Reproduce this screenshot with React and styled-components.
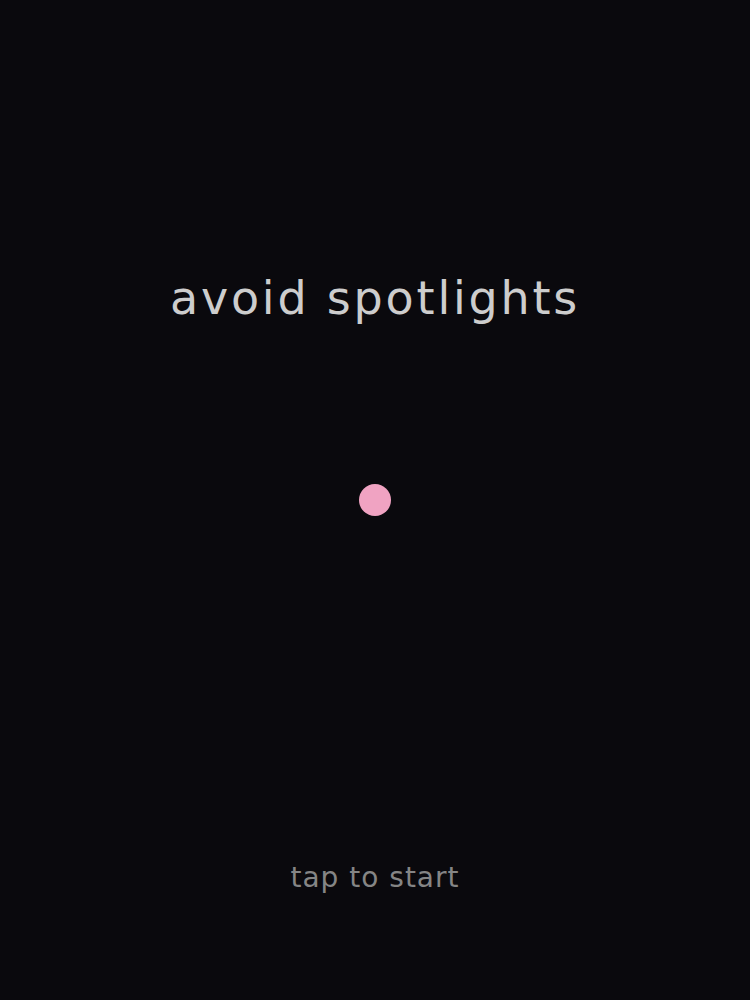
import React from "react";
import styled, { createGlobalStyle } from "styled-components";

const GlobalStyle = createGlobalStyle`
  html, body {
    margin: 0;
    padding: 0;
    background-color: #0a090d;
  }
`

const Screen = styled.div`
  height: 1000px;
  display: flex;
  flex-direction: column;
  align-items: center;
  background-color: #0a090d;
  font-family: "DejaVu Sans", "Liberation Sans", sans-serif;
  box-sizing: border-box;
`

const Title = styled.h1`
  margin: 270px 0 0;
  font-size: 46px;
  font-weight: normal;
  line-height: 56px;
  letter-spacing: 2.8px;
  color: #cdcdcd;
`

const Player = styled.div`
  margin-top: 158px;
  width: 32px;
  height: 32px;
  border-radius: 50%;
  background-color: #f0a3c2;
`

const Hint = styled.div`
  margin-top: auto;
  margin-bottom: 104px;
  font-size: 28px;
  line-height: 36px;
  letter-spacing: 1px;
  color: #858585;
`

const App = () => (
  <>
    <GlobalStyle />
    <Screen>
      <Title>avoid spotlights</Title>
      <Player />
      <Hint>tap to start</Hint>
    </Screen>
  </>
)

export default App
